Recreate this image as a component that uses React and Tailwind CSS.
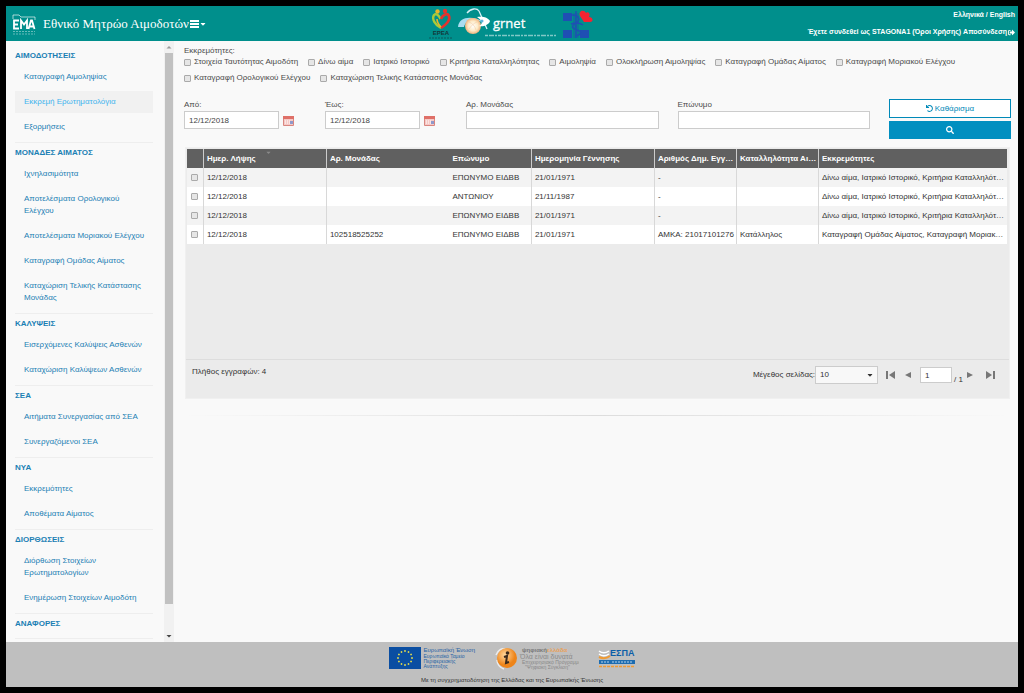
import React from 'react';
import { FaCaretDown, FaSearch, FaSignOutAlt, FaUndo } from 'react-icons/fa';

const MENU = [
  { title: 'ΑΙΜΟΔΟΤΗΣΕΙΣ', items: ['Καταγραφή Αιμοληψίας', 'Εκκρεμή Ερωτηματολόγια', 'Εξορμήσεις'] },
  {
    title: 'ΜΟΝΑΔΕΣ ΑΙΜΑΤΟΣ',
    items: [
      'Ιχνηλασιμότητα',
      'Αποτελέσματα Ορολογικού Ελέγχου',
      'Αποτελέσματα Μοριακού Ελέγχου',
      'Καταγραφή Ομάδας Αίματος',
      'Καταχώριση Τελικής Κατάστασης Μονάδας',
    ],
  },
  { title: 'ΚΑΛΥΨΕΙΣ', items: ['Εισερχόμενες Καλύψεις Ασθενών', 'Καταχώριση Καλύψεων Ασθενών'] },
  { title: 'ΣΕΑ', items: ['Αιτήματα Συνεργασίας από ΣΕΑ', 'Συνεργαζόμενοι ΣΕΑ'] },
  { title: 'ΝΥΑ', items: ['Εκκρεμότητες', 'Αποθέματα Αίματος'] },
  { title: 'ΔΙΟΡΘΩΣΕΙΣ', items: ['Διόρθωση Στοιχείων Ερωτηματολογίων', 'Ενημέρωση Στοιχείων Αιμοδότη'] },
  { title: 'ΑΝΑΦΟΡΕΣ', items: [] },
];
const ACTIVE = 'Εκκρεμή Ερωτηματολόγια';

const PENDING = [
  'Στοιχεία Ταυτότητας Αιμοδότη',
  'Δίνω αίμα',
  'Ιατρικό Ιστορικό',
  'Κριτήρια Καταλληλότητας',
  'Αιμοληψία',
  'Ολοκλήρωση Αιμοληψίας',
  'Καταγραφή Ομάδας Αίματος',
  'Καταγραφή Μοριακού Ελέγχου',
  'Καταγραφή Ορολογικού Ελέγχου',
  'Καταχώριση Τελικής Κατάστασης Μονάδας',
];

const COLUMNS = [
  { label: 'Ημερ. Λήψης', width: 'w-[15%]', line: true, sorted: true },
  { label: 'Αρ. Μονάδας', width: 'w-[15%]', line: true },
  { label: 'Επώνυμο', width: 'w-[10%]', line: false },
  { label: 'Ημερομηνία Γέννησης', width: 'w-[15%]', line: true },
  { label: 'Αριθμός Δημ. Εγγραφής', width: 'w-[10%]', line: true },
  { label: 'Καταλληλότητα Αιμοδότη', width: 'w-[10%]', line: true },
  { label: 'Εκκρεμότητες', width: 'w-[23%]', line: true },
];

const PENDING_TEXT = 'Δίνω αίμα, Ιατρικό Ιστορικό, Κριτήρια Καταλληλότητας';
const ROWS = [
  ['12/12/2018', '', 'ΕΠΩΝΥΜΟ ΕΙΔΒΒ', '21/01/1971', '-', '', PENDING_TEXT],
  ['12/12/2018', '', 'ΑΝΤΩΝΙΟΥ', '21/11/1987', '-', '', PENDING_TEXT],
  ['12/12/2018', '', 'ΕΠΩΝΥΜΟ ΕΙΔΒΒ', '21/01/1971', '-', '', PENDING_TEXT],
  ['12/12/2018', '102518525252', 'ΕΠΩΝΥΜΟ ΕΙΔΒΒ', '21/01/1971', 'ΑΜΚΑ: 21017101276', 'Κατάλληλος', 'Καταγραφή Ομάδας Αίματος, Καταγραφή Μοριακού Ελέγχου'],
];

const BOX = 'size-[7px] shrink-0 appearance-none rounded-[1px] border border-[#aaa] bg-[#e6e6e6] checked:bg-[#0089b8]';
const FIELD = 'h-[18px] w-full min-w-0 border border-[#ccc] bg-white px-1 text-[#444]';

function EmaLogo() {
  return (
    <svg width="24" height="24" viewBox="0 0 24 24" fill="none" stroke="#fff" aria-label="ΕΜΑ">
      <path d="M1 7V3h6l2 2h14v3" strokeWidth="0.8" opacity="0.8" />
      <path d="M7 8.500H2v8h5M2 12.500h4M9 17V8.500l3 4 3-4V17M16.500 17l2.500-8.500h1L22.500 17M17.500 14.500h4" strokeWidth="1.800" />
      <path d="M1 19.500h22M1 22h22" strokeWidth="1" strokeDasharray="2 1" opacity="0.4" />
    </svg>
  );
}

function EpeaLogo() {
  return (
    <svg width="26" height="32" viewBox="0 0 26 32" aria-label="ΕΡΕΑ">
      <circle cx="9.500" cy="3.500" r="2.200" fill="#e9b52a" />
      <circle cx="17" cy="3" r="2.200" fill="#e5322d" />
      <path d="M13 20C7 17 3.500 11 6 7c2-2 5 0 6.500 4" fill="none" stroke="#a9c93a" strokeWidth="2.400" />
      <path d="M13 20c6-4 10-9 7.500-13-2-2-6 0-7.500 4" fill="none" stroke="#e5322d" strokeWidth="2.600" />
      <path d="M9 11c0 3 2 6 4 8" fill="none" stroke="#e9b52a" strokeWidth="1.600" />
      <text x="13" y="27" textAnchor="middle" fontSize="6" fontWeight="700" fill="#14373a" fontFamily="Liberation Sans, sans-serif">ΕΡΕΑ</text>
      <path d="M1 30h24" stroke="#14373a" strokeWidth="1" strokeDasharray="2 1" opacity="0.6" />
    </svg>
  );
}

function GrnetLogo() {
  return (
    <svg width="100" height="32" viewBox="0 0 100 32" aria-label="grnet">
      <defs>
        <radialGradient id="globe">
          <stop offset="0" stopColor="#fff" />
          <stop offset="0.6" stopColor="#fdebc8" />
          <stop offset="1" stopColor="#f0b27c" />
        </radialGradient>
      </defs>
      <path d="M0 19C1 8 15 7 28 15c-9-3-20-5-22 4z" fill="#a9dcf0" />
      <path d="M9 5c4-5 10-5 12-2l8 18" fill="none" stroke="#d8f1f8" strokeWidth="1.300" />
      <circle cx="15" cy="18" r="8" fill="url(#globe)" />
      <path d="M11 14c3 1 6 4 7 8M11 21c2-3 5-6 8-7" fill="none" stroke="#eec79e" strokeWidth="0.500" />
      <path d="M19 9c5-1 11 0 13 4-1 4-7 6-11 5 4-2 4-5-2-9z" fill="#fff" />
      <circle cx="24" cy="13" r="1.500" fill="#5db4dc" />
      <text x="35" y="20" fontSize="13" fill="#fff" stroke="#fff" strokeWidth="0.300" fontFamily="Open Sans, Noto Sans, sans-serif">grnet</text>
      <path d="M27 27.500h71" stroke="#d5efee" strokeWidth="1.300" strokeDasharray="3 1 5 1 2 1" opacity="0.6" />
    </svg>
  );
}

function CrossLogo() {
  return (
    <svg width="34" height="32" viewBox="0 0 34 32" aria-label="Υγεία">
      <path d="M1 5h9v8H1zM1 22h9v8H1zM18 22h9v8h-9z" fill="#1f4fb4" />
      <path d="M11 5h6v25h-6z" fill="#17609f" opacity="0.45" />
      <path d="M14 3v27M10 7c7 0 9 5 4 8s-5 5 1 7 3 5-1 6M9 16c3-1 8-2 12 1" fill="none" stroke="#1f4fb4" strokeWidth="1.400" />
      <path d="M22 14l-4-6c-2-5 4-7 6-3 2-2 5 1 3 4 4 0 5 5 1 5z" fill="#f42332" />
    </svg>
  );
}

function MenuBars() {
  return (
    <svg width="9" height="8" viewBox="0 0 9 8" fill="currentColor" aria-hidden="true">
      <path d="M0 0h9v2H0zM0 3h9v2H0zM0 6h9v2H0z" />
    </svg>
  );
}

function CalendarIcon() {
  return (
    <svg width="11" height="11" viewBox="0 0 11 11" aria-hidden="true">
      <path d="M.5 1.500h10v9H.5z" fill="#f6c9c6" stroke="#d98680" />
      <path d="M0 1h11v3H0z" fill="#df7068" />
      <path d="M2 6h5M2 8h5" stroke="#fff" strokeDasharray="1 1" />
      <path d="M7 6h3v3H7z" fill="#8f9acb" />
    </svg>
  );
}

function EuFlag() {
  const stars = Array.from({ length: 12 }, (_, i) => i * 30);
  return (
    <svg width="32" height="22" viewBox="0 0 32 22" aria-label="Ευρωπαϊκή Ένωση">
      <rect width="32" height="22" fill="#0a4ea2" />
      {stars.map((a) => (
        <circle key={a} cx="16" cy="4" r="0.900" fill="#e8e04a" transform={`rotate(${a} 16 11)`} />
      ))}
    </svg>
  );
}

function DigitalLogo() {
  return (
    <svg width="84" height="24" viewBox="0 0 84 24" fontFamily="Liberation Sans, sans-serif" aria-label="Ψηφιακή Ελλάδα">
      <defs>
        <radialGradient id="orb" cx="0.4" cy="0.35">
          <stop offset="0" stopColor="#ffd9a0" />
          <stop offset="1" stopColor="#ee8418" />
        </radialGradient>
      </defs>
      <path d="M1 9c2-5 6-7 9-6M2 14c0 4 3 8 7 9" fill="none" stroke="#ececec" strokeWidth="1.500" />
      <circle cx="12" cy="12" r="10" fill="url(#orb)" />
      <circle cx="12.500" cy="7" r="1.800" fill="#3b2a1c" />
      <path d="M9 11l3-1-1 7 3-1" fill="none" stroke="#3b2a1c" strokeWidth="2" />
      <text x="27" y="6" fontSize="6" fontWeight="700" fill="#777">ψηφιακή<tspan fill="#e9a15a">ελλάδα</tspan></text>
      <text x="25" y="13" fontSize="7" fill="#8a8a8a">Όλα είναι δυνατά</text>
      <text x="27" y="18" fontSize="5" fill="#888">Επιχειρησιακό Πρόγραμμα</text>
      <text x="30" y="23" fontSize="5" fill="#888">"Ψηφιακή Σύγκλιση"</text>
    </svg>
  );
}

function EspaLogo() {
  return (
    <svg width="38" height="24" viewBox="0 0 38 24" fontFamily="Liberation Sans, sans-serif" aria-label="ΕΣΠΑ">
      <path d="M1 5c4 3 7 2 10 0M1 8c4 3 7 2 10 0" fill="none" stroke="#fff" strokeWidth="1.500" />
      <path d="M1 11c4 2 7 2 11-1" fill="none" stroke="#f09b33" strokeWidth="2" />
      <text x="12" y="10" fontSize="9" fontWeight="700" fill="#0d5ea8">ΕΣΠΑ</text>
      <rect x="1" y="14" width="36" height="4" fill="#1d6cb0" />
      <path d="M3 16h8M14 16h20" stroke="#b8d4ea" strokeDasharray="2 1" />
      <path d="M1 20.500h36" stroke="#f09b33" strokeWidth="1.500" strokeDasharray="3 1" />
    </svg>
  );
}

function PagerButton({ label, path }) {
  return (
    <button type="button" aria-label={label} className="h-3 w-[9px] text-[#777]">
      <svg width="9" height="8" viewBox="0 0 9 8" fill="currentColor">
        <path d={path} />
      </svg>
    </button>
  );
}

function Header() {
  return (
    <header className="grid h-[35px] shrink-0 grid-cols-[1fr_auto_1fr] items-center bg-[#008f8c] text-white">
      <div className="flex items-center pl-[6px]">
        <EmaLogo />
        <h1 className="ml-[7px] whitespace-nowrap font-['Liberation_Serif',serif] text-[13px] leading-4">Εθνικό Μητρώο Αιμοδοτών</h1>
        <button type="button" aria-label="Μενού" className="ml-px flex items-center">
          <MenuBars />
          <FaCaretDown size={8} />
        </button>
      </div>
      <div className="flex items-center gap-1">
        <EpeaLogo />
        <GrnetLogo />
        <CrossLogo />
      </div>
      <div className="flex flex-col items-end gap-[5px] whitespace-nowrap pr-[3px] text-[7px] font-bold leading-3">
        <div>
          <a href="#el">Ελληνικά</a> / <a href="#en">English</a>
        </div>
        <div className="flex items-center">
          <span>
            Έχετε συνδεθεί ως STAGONA1 (<a href="#terms">Όροι Χρήσης</a>)&nbsp;
          </span>
          <a href="#logout" className="flex items-center gap-px">
            Αποσύνδεση <FaSignOutAlt size={7} />
          </a>
        </div>
      </div>
    </header>
  );
}

function Sidebar() {
  return (
    <div className="flex w-[168px] shrink-0">
      <nav className="min-w-0 flex-1 overflow-hidden pl-[9px] pr-[11px] pt-[9px] text-[#1b80b4]">
        {MENU.map((section) => (
          <section key={section.title} className="mb-1 border-b border-[#eee] pb-1">
            <h2 className="font-bold">{section.title}</h2>
            <ul className="mt-1 flex flex-col gap-[3px]">
              {section.items.map((item) => (
                <li key={item}>
                  <a
                    href="#menu"
                    className={item === ACTIVE ? 'block bg-[#f1f1f1] py-[5px] pl-[9px] pr-1 text-[#42b4ee]' : 'block py-[5px] pl-[9px] pr-1'}
                  >
                    {item}
                  </a>
                </li>
              ))}
            </ul>
          </section>
        ))}
      </nav>
      <div className="flex w-[10px] flex-col items-center bg-[#f1f1f1]" aria-hidden="true">
        <svg width="10" height="12" viewBox="0 0 10 12"><path d="M2.500 7.500L5 5l2.500 2.500z" fill="#999" /></svg>
        <div className="w-2 flex-1 bg-[#c1c1c1]" />
        <svg width="10" height="38" viewBox="0 0 10 38"><path d="M2.500 31L5 33.500 7.500 31z" fill="#444" /></svg>
      </div>
    </div>
  );
}

function DateField({ id, label }) {
  return (
    <div className="col-span-2">
      <label htmlFor={id} className="block">{label}</label>
      <div className="flex items-center gap-1">
        <input id={id} defaultValue="12/12/2018" className={FIELD} />
        <button type="button" aria-label="Ημερολόγιο" className="mr-3 shrink-0"><CalendarIcon /></button>
      </div>
    </div>
  );
}

function Filters() {
  return (
    <form onSubmit={(e) => e.preventDefault()}>
      <fieldset>
        <legend className="leading-[10px]">Εκκρεμότητες:</legend>
        <div className="flex flex-wrap gap-x-[10px] gap-y-1">
          {PENDING.map((name) => (
            <label key={name} className="flex items-center gap-[3px] whitespace-nowrap">
              <input type="checkbox" className={BOX} />
              {name}
            </label>
          ))}
        </div>
      </fieldset>
      <div className="mt-[15px] grid grid-cols-12 items-start gap-x-[19px]">
        <DateField id="from" label="Από:" />
        <DateField id="to" label="Έως:" />
        <div className="col-span-3">
          <label htmlFor="unit" className="block">Αρ. Μονάδας</label>
          <input id="unit" className={FIELD} />
        </div>
        <div className="col-span-3">
          <label htmlFor="surname" className="block">Επώνυμο</label>
          <input id="surname" className={FIELD} />
        </div>
        <div className="col-span-2 flex flex-col gap-[3px]">
          <button type="reset" className="flex h-[19px] items-center justify-center gap-[2px] border border-[#0089b8] bg-white text-[#0089b8]">
            <FaUndo size={7} /> Καθάρισμα
          </button>
          <button type="submit" aria-label="Αναζήτηση" className="flex h-[18px] items-center justify-center bg-[#008fc0] text-white">
            <FaSearch size={8} />
          </button>
        </div>
      </div>
    </form>
  );
}

function Grid() {
  return (
    <div className="mr-px ml-px mt-2 border border-[#f0f0f0] bg-[#ebebeb]">
      <div className="min-h-[212px] border-b border-[#ddd] pl-px pr-[2px] pt-px">
        <table className="w-full table-fixed border-collapse text-left">
          <thead>
            <tr className="h-[19px] bg-[#606060] text-white">
              <th className="w-[2%]" aria-label="Επιλογή" />
              {COLUMNS.map((col) => (
                <th key={col.label} className={`${col.width} ${col.line ? 'border-l border-[#ccc]' : ''} relative truncate pl-[3px] font-bold`}>
                  {col.label}
                  {col.sorted && <FaCaretDown size={7} className="absolute left-1/2 top-0 text-[#8a8a8a]" />}
                </th>
              ))}
            </tr>
          </thead>
          <tbody>
            {ROWS.map((row, r) => (
              <tr key={r} className="h-[19px] odd:bg-[#f3f3f3] even:bg-white last:bg-white">
                <td>
                  <input type="checkbox" aria-label={`Γραμμή ${r + 1}`} className={`${BOX} mx-auto block`} />
                </td>
                {row.map((cell, c) => (
                  <td key={c} className={`${COLUMNS[c].line ? 'border-l border-[#d8d8d8]' : ''} truncate pl-[3px] text-[#333]`}>
                    {cell}
                  </td>
                ))}
              </tr>
            ))}
          </tbody>
        </table>
      </div>
      <div className="flex h-[38px] items-start justify-between pl-[6px] pr-[14px] pt-[6px] text-[#333]">
        <span>Πλήθος εγγραφών: 4</span>
        <div className="flex items-center">
          <label htmlFor="size">Μέγεθος σελίδας:</label>
          <div className="relative">
            <select id="size" className="block h-[18px] w-[63px] appearance-none border border-[#ccc] bg-[#f8f8f8] px-1">
              <option>10</option>
            </select>
            <FaCaretDown size={8} className="pointer-events-none absolute right-1 top-[5px]" />
          </div>
          <div className="ml-2 flex items-center gap-2">
            <PagerButton label="Πρώτη" path="M0 0h2v8H0zM9 0v8L3 4z" />
            <PagerButton label="Προηγούμενη" path="M8 1v6L2 4z" />
          </div>
          <input aria-label="Σελίδα" defaultValue="1" className="ml-2 h-4 w-8 border border-[#ccc] bg-white px-1" />
          <span className="ml-[2px] self-end leading-[8px]">/ 1</span>
          <div className="ml-[3px] flex items-center gap-[11px]">
            <PagerButton label="Επόμενη" path="M1 1v6l6-3z" />
            <PagerButton label="Τελευταία" path="M7 0h2v8H7zM0 0v8l6-4z" />
          </div>
        </div>
      </div>
    </div>
  );
}

function Footer() {
  return (
    <footer className="flex h-[45px] shrink-0 flex-col items-center justify-between bg-[#bfbfbf] pb-px pt-1 text-[#333]">
      <div className="flex items-center gap-[19px]">
        <div className="flex items-center gap-[3px]">
          <EuFlag />
          <div className="w-[52px] whitespace-nowrap text-[5px] leading-[5px] text-[#2562a5]">
            <div className="text-[6px] leading-[7px]">Ευρωπαϊκή Ένωση</div>
            <div>Ευρωπαϊκό Ταμείο</div>
            <div>Περιφερειακής</div>
            <div>Ανάπτυξης</div>
          </div>
        </div>
        <DigitalLogo />
        <EspaLogo />
      </div>
      <p className="text-[6px] leading-3">Με τη συγχρηματοδότηση της Ελλάδας και της Ευρωπαϊκής Ένωσης</p>
    </footer>
  );
}

export default function App() {
  return (
    <div className="flex h-screen flex-col border-[6px] border-black bg-[#f9f9f9] font-['Liberation_Sans',Arial,sans-serif] text-[8px] leading-3 text-[#4a4a4a]">
      <Header />
      <div className="flex min-h-0 flex-1">
        <Sidebar />
        <main className="min-w-0 flex-1 pl-[10px] pr-[7px] pt-[5px]">
          <Filters />
          <Grid />
          <hr className="mt-4 h-px border-0 bg-linear-to-r from-transparent via-[#ddd] to-transparent" />
        </main>
      </div>
      <Footer />
    </div>
  );
}
